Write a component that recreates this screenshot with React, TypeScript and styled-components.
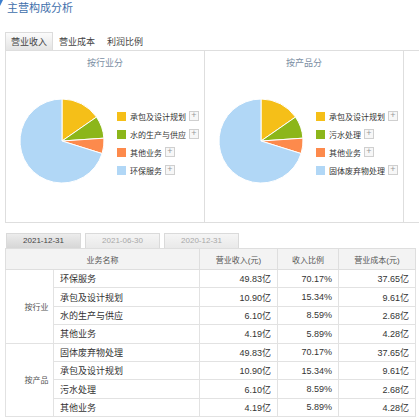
import React from "react"
import styled, { createGlobalStyle } from "styled-components"

const GlobalStyle = createGlobalStyle`
    body {
        margin: 0;
        background: #fff;
        font-family: "Liberation Sans", "Noto Sans CJK SC", sans-serif;
        color: #333;
    }
`

const Page = styled.div`
    position: relative;
    width: 419px;
    height: 420px;
    overflow: hidden;
`

const Corner = styled.span`
    position: absolute;
    left: 0;
    top: 0;
    width: 0;
    height: 0;
    border-top: 6px solid #3d7fcf;
    border-right: 3px solid transparent;
`

const Title = styled.h2`
    margin: 0;
    height: 32px;
    box-sizing: border-box;
    padding: 2px 0 0 7px;
    font-size: 11px;
    line-height: 13px;
    font-weight: normal;
    color: #3f70ac;
`

const Tabs = styled.div`
    display: flex;
    padding-left: 5px;
    height: 18px;
`

const Tab = styled.div<{ $active?: boolean }>`
    box-sizing: border-box;
    padding: 0 5px;
    height: 18px;
    line-height: 18px;
    font-size: 9px;
    color: #444;
    background: ${p => p.$active ? "linear-gradient(#fbfbfb, #e4e4e4)" : "transparent"};
    border: 1px solid ${p => p.$active ? "#dcdcdc" : "transparent"};
    border-bottom: none;
`

const Panels = styled.div`
    display: flex;
    box-sizing: border-box;
    margin-left: 5px;
    height: 173px;
    width: 600px;
    border-top: 1px solid #dedede;
    border-bottom: 1px solid #dedede;
`

const Panel = styled.div`
    box-sizing: border-box;
    width: 199px;
    flex: none;
    border-left: 1px solid #dedede;
`

const PanelTitle = styled.div`
    margin-top: 6px;
    text-align: center;
    font-size: 9px;
    line-height: 12px;
    color: #7b8ea3;
`

const ChartRow = styled.div`
    display: flex;
    align-items: center;
    margin-top: 30px;
    padding-left: 14px;
`

const Legend = styled.ul`
    list-style: none;
    margin: 4px 0 0 13px;
    padding: 0;
`

const LegendItem = styled.li`
    display: flex;
    align-items: center;
    height: 18px;
    font-size: 8px;
    color: #333;
    white-space: nowrap;
`

const Swatch = styled.span<{ $color: string }>`
    width: 9px;
    height: 9px;
    margin-right: 4px;
    background: ${p => p.$color};
`

const PlusBox = styled.span`
    box-sizing: border-box;
    width: 10px;
    height: 10px;
    margin-left: 3px;
    border: 1px solid #cfcfcf;
    background: #f7f7f7;
    color: #999;
    font-size: 9px;
    line-height: 7px;
    text-align: center;
`

const DateTabs = styled.div`
    display: flex;
    gap: 4px;
    margin-top: 10px;
    padding-left: 6px;
`

const DateTab = styled.div<{ $active?: boolean }>`
    box-sizing: border-box;
    width: 75px;
    height: 15px;
    line-height: 14px;
    text-align: center;
    font-size: 8px;
    color: ${p => p.$active ? "#444" : "#a8a8a8"};
    background: ${p => p.$active ? "linear-gradient(#ececec, #d6d6d6)" : "linear-gradient(#f5f5f5, #e9e9e9)"};
    border: 1px solid #dadada;
    border-bottom: none;
`

const Table = styled.table`
    margin-left: 5px;
    width: 410px;
    table-layout: fixed;
    border-collapse: collapse;
`

const Th = styled.th`
    height: 20px;
    padding: 0;
    background: #f3f3f3;
    border: 1px solid #dedede;
    font-size: 8px;
    font-weight: normal;
    color: #555;
    text-align: center;
`

const Td = styled.td<{ $align?: string }>`
    height: 17.4px;
    padding: 0 6px;
    border: 1px solid #e2e2e2;
    font-size: 9px;
    color: #333;
    text-align: ${p => p.$align || "right"};
    white-space: nowrap;
`

const GroupCell = styled.td`
    padding: 0 0 0 14px;
    border: 1px solid #e2e2e2;
    font-size: 8px;
    color: #555;
    text-align: center;
    vertical-align: middle;
`

type Slice = { name: string; v: number; c: string }

const colors = ["#f5bf18", "#8cb61a", "#fd8a4c", "#b1d7f6"]

const byIndustry: Slice[] = [
    { name: "承包及设计规划", v: 15.34, c: colors[0] },
    { name: "水的生产与供应", v: 8.59, c: colors[1] },
    { name: "其他业务", v: 5.89, c: colors[2] },
    { name: "环保服务", v: 70.17, c: colors[3] },
]

const byProduct: Slice[] = [
    { name: "承包及设计规划", v: 15.34, c: colors[0] },
    { name: "污水处理", v: 8.59, c: colors[1] },
    { name: "其他业务", v: 5.89, c: colors[2] },
    { name: "固体废弃物处理", v: 70.17, c: colors[3] },
]

function Pie({ data }: { data: Slice[] }) {
    const r = 42
    const total = data.reduce((s, d) => s + d.v, 0)
    let a = -Math.PI / 2
    return (
        <svg width="84" height="84" viewBox="0 0 84 84">
            {data.map(d => {
                const b = a + (d.v / total) * Math.PI * 2
                const x1 = r + r * Math.cos(a), y1 = r + r * Math.sin(a)
                const x2 = r + r * Math.cos(b), y2 = r + r * Math.sin(b)
                const large = b - a > Math.PI ? 1 : 0
                a = b
                return <path key={d.name} d={`M${r} ${r}L${x1} ${y1}A${r} ${r} 0 ${large} 1 ${x2} ${y2}Z`} fill={d.c} stroke="#fff" strokeWidth="1" />
            })}
        </svg>
    )
}

function ChartPanel({ title, data }: { title: string; data: Slice[] }) {
    return (
        <Panel>
            <PanelTitle>{title}</PanelTitle>
            <ChartRow>
                <Pie data={data} />
                <Legend>
                    {data.map(d => (
                        <LegendItem key={d.name}>
                            <Swatch $color={d.c} />
                            {d.name}
                            <PlusBox>+</PlusBox>
                        </LegendItem>
                    ))}
                </Legend>
            </ChartRow>
        </Panel>
    )
}

const values = [
    ["49.83亿", "70.17%", "37.65亿"],
    ["10.90亿", "15.34%", "9.61亿"],
    ["6.10亿", "8.59%", "2.68亿"],
    ["4.19亿", "5.89%", "4.28亿"],
]

const groups = [
    { label: "按行业", names: ["环保服务", "承包及设计规划", "水的生产与供应", "其他业务"] },
    { label: "按产品", names: ["固体废弃物处理", "承包及设计规划", "污水处理", "其他业务"] },
]

export default function App() {
    return (
        <Page>
            <GlobalStyle />
            <Corner />
            <Title>主营构成分析</Title>
            <Tabs>
                <Tab $active>营业收入</Tab>
                <Tab>营业成本</Tab>
                <Tab>利润比例</Tab>
            </Tabs>
            <Panels>
                <ChartPanel title="按行业分" data={byIndustry} />
                <ChartPanel title="按产品分" data={byProduct} />
                <Panel />
            </Panels>
            <DateTabs>
                <DateTab $active>2021-12-31</DateTab>
                <DateTab>2021-06-30</DateTab>
                <DateTab>2020-12-31</DateTab>
            </DateTabs>
            <Table>
                <colgroup>
                    <col style={{ width: 48 }} />
                    <col style={{ width: 146 }} />
                    <col style={{ width: 78 }} />
                    <col style={{ width: 61 }} />
                    <col style={{ width: 77 }} />
                </colgroup>
                <thead>
                    <tr>
                        <Th colSpan={2}>业务名称</Th>
                        <Th>营业收入(元)</Th>
                        <Th>收入比例</Th>
                        <Th>营业成本(元)</Th>
                    </tr>
                </thead>
                <tbody>
                    {groups.map(g => g.names.map((n, i) => (
                        <tr key={g.label + n}>
                            {i === 0 && <GroupCell rowSpan={4}>{g.label}</GroupCell>}
                            <Td $align="left">{n}</Td>
                            <Td>{values[i][0]}</Td>
                            <Td>{values[i][1]}</Td>
                            <Td>{values[i][2]}</Td>
                        </tr>
                    )))}
                </tbody>
            </Table>
        </Page>
    )
}
